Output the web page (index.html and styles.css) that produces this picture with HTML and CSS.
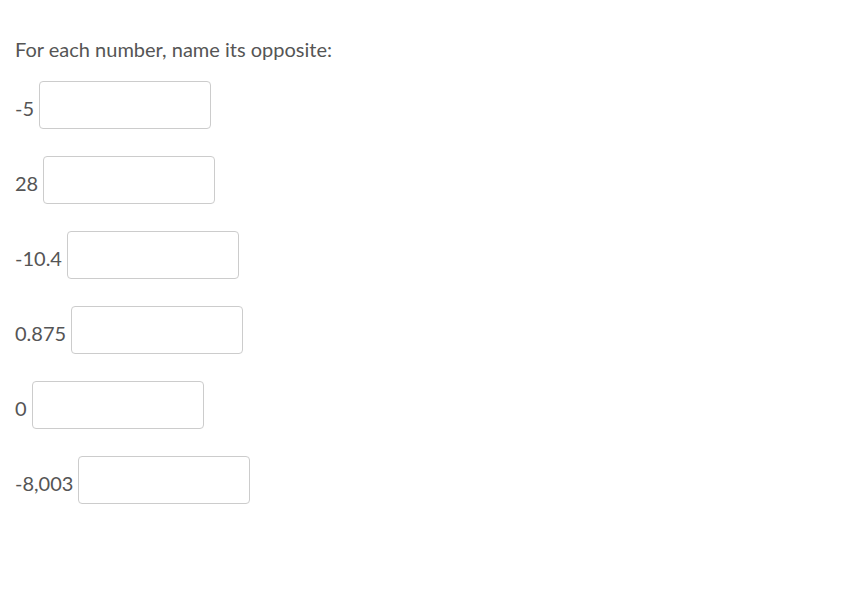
FILE: index.html
```html
<!DOCTYPE html>
<html>
<head>
<meta charset="utf-8">
<link rel="stylesheet" href="styles.css">
</head>
<body>
<div class="question">
  <p class="prompt">For each number, name its opposite:</p>
  <div class="row"><span class="num">-5</span><input class="answer" type="text"></div>
  <div class="row"><span class="num">28</span><input class="answer" type="text"></div>
  <div class="row"><span class="num">-10.4</span><input class="answer" type="text"></div>
  <div class="row"><span class="num">0.875</span><input class="answer" type="text"></div>
  <div class="row"><span class="num">0</span><input class="answer" type="text"></div>
  <div class="row"><span class="num">-8,003</span><input class="answer" type="text"></div>
</div>
</body>
</html>
```
FILE: styles.css
```css
html, body {
  margin: 0;
  padding: 0;
  background: #ffffff;
}
body {
  font-family: Lato, "Liberation Sans", sans-serif;
  color: #555555;
  font-size: 20px;
}
.question {
  padding: 35px 15px 0 15px;
}
.prompt {
  margin: 0 0 18px 0;
  line-height: 28px;
  font-size: 20px;
}
.row {
  display: flex;
  align-items: center;
  height: 48px;
  margin-bottom: 27px;
}
.num {
  padding-top: 6px;
  margin-right: 5px;
}
.answer {
  box-sizing: border-box;
  width: 172px;
  height: 48px;
  border: 1px solid #cccccc;
  border-radius: 4px;
  background: #fff;
  margin: 0;
  padding: 0 10px;
  font: inherit;
}
```
